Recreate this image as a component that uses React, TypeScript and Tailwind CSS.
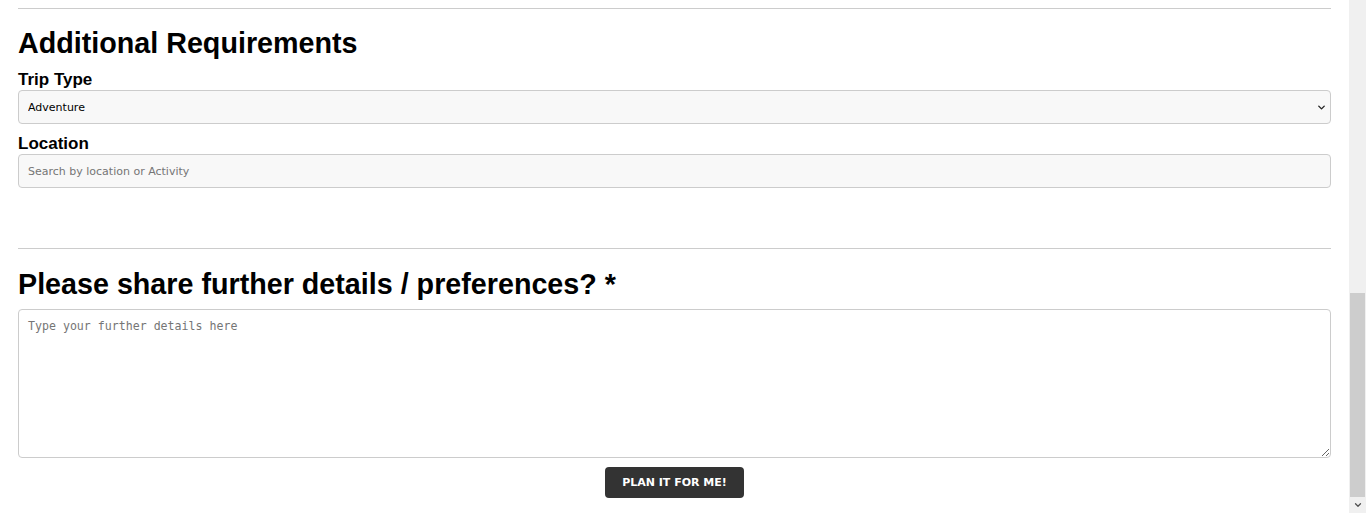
import { ChevronDown } from "lucide-react";

export default function App() {
  return (
    <div className="flex h-[513px] w-full overflow-hidden bg-white text-black">
      <main className="flex-1 px-[18px] pt-2 font-['Liberation_Sans',Arial,sans-serif]">
        <hr className="border-t border-[#cccccc]" />

        <h2 className="mt-[17px] mb-[9px] text-[28.7px] font-bold leading-[34px]">Additional Requirements</h2>

        <label className="block text-[17px] font-bold leading-[21px]">Trip Type</label>
        <div className="relative">
          <select
            defaultValue="Adventure"
            className="block h-[34px] w-full appearance-none rounded border border-[#cccccc] bg-[#f8f8f8] px-[9px] pt-[2px] font-['DejaVu_Sans',Verdana,sans-serif] text-[11px] text-black"
          >
            <option>Adventure</option>
            <option>Relaxation</option>
            <option>Cultural</option>
          </select>
          <ChevronDown
            className="pointer-events-none absolute right-[4px] top-[12px] h-[11px] w-[11px] text-[#222222]"
            strokeWidth={3}
          />
        </div>

        <label className="mt-[9px] block text-[17px] font-bold leading-[21px]">Location</label>
        <input
          type="text"
          placeholder="Search by location or Activity"
          className="block h-[34px] w-full rounded border border-[#cccccc] bg-[#f8f8f8] px-[9px] font-['DejaVu_Sans',Verdana,sans-serif] text-[11px] text-black placeholder:text-[#757575]"
        />

        <hr className="mt-[60px] border-t border-[#cccccc]" />

        <h2 className="mt-[18px] mb-[8px] text-[28.7px] font-bold leading-[34px]">
          Please share further details / preferences? *
        </h2>

        <textarea
          placeholder="Type your further details here"
          className="block h-[149px] w-full rounded border border-[#cccccc] bg-white px-[9px] py-[9px] font-['DejaVu_Sans_Mono',monospace] text-[11.6px] leading-[15px] placeholder:text-[#757575]"
        />

        <div className="mt-[9px] flex justify-center">
          <button className="h-[31px] w-[139px] rounded bg-[#333333] pt-[2px] font-['DejaVu_Sans',Verdana,sans-serif] text-[11px] font-bold text-white">
            PLAN IT FOR ME!
          </button>
        </div>
      </main>

      {/* scrollbar */}
      <div className="flex w-[17px] flex-col bg-[#f0f0f0]">
        <div className="h-[293px]" />
        <div className="mx-px flex-1 bg-[#cdcdcd]" />
        <div className="flex h-[16px] items-center justify-center">
          <ChevronDown className="h-[10px] w-[10px] text-[#505050]" strokeWidth={3} />
        </div>
      </div>
    </div>
  );
}
